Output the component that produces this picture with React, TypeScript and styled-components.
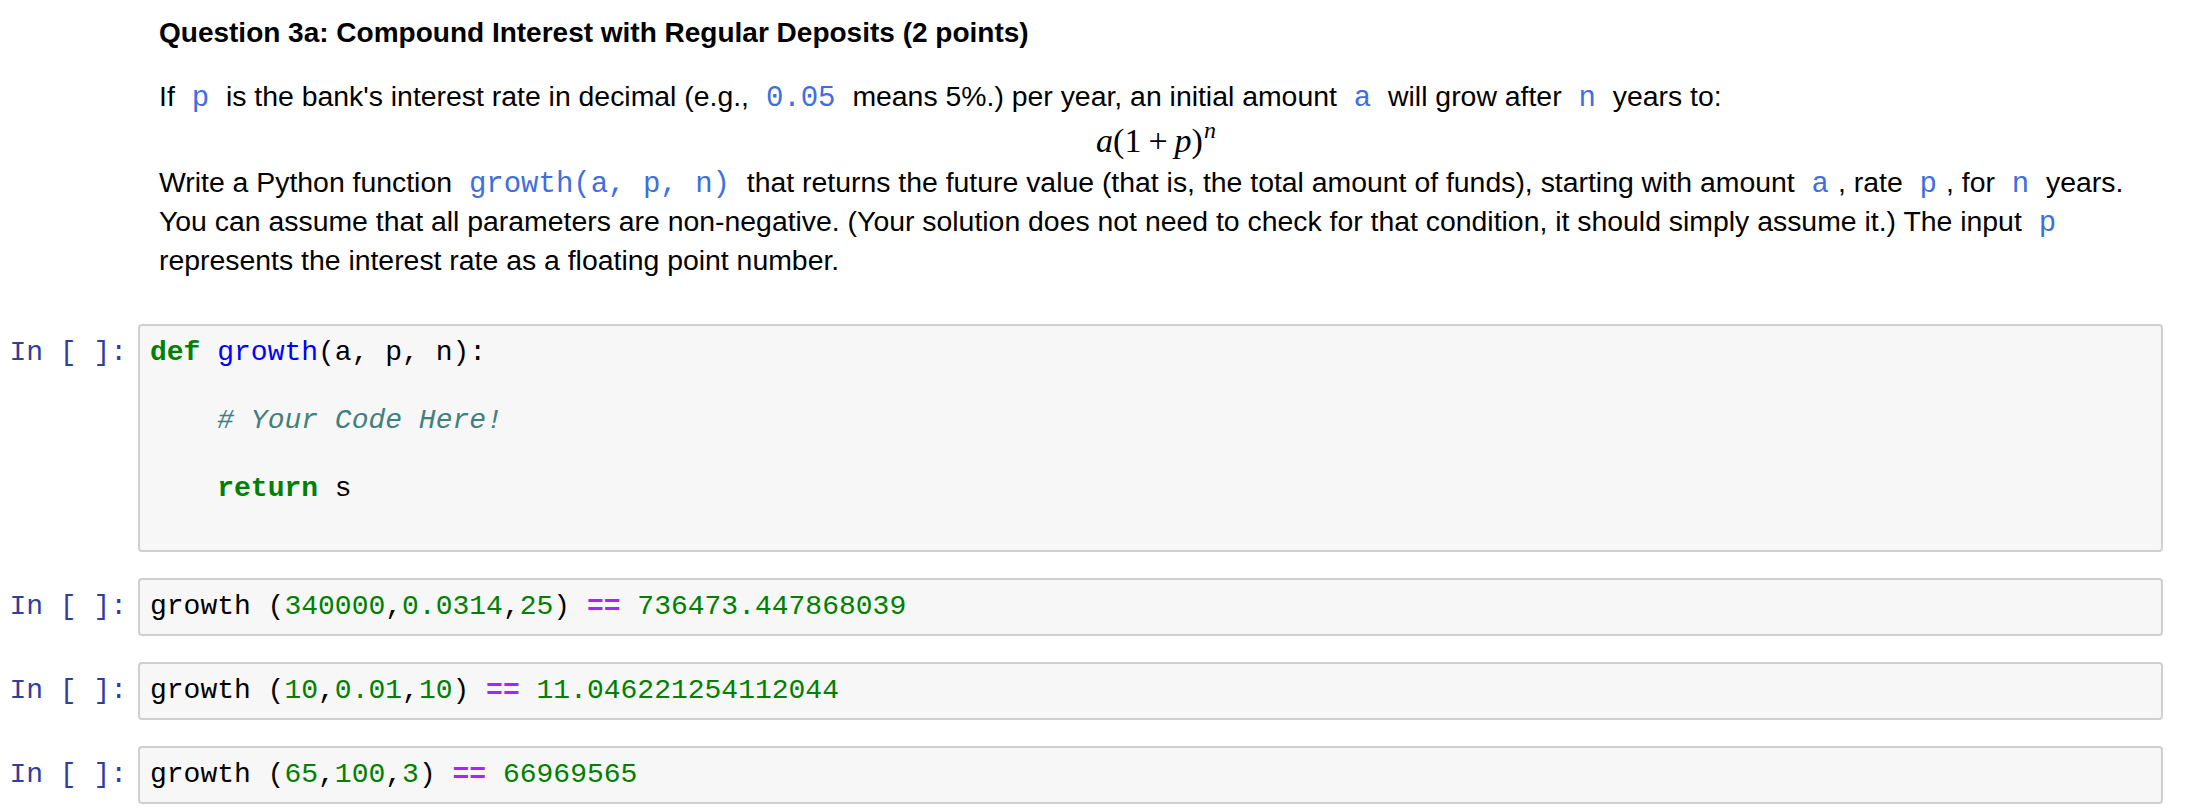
import React from "react";
import styled, { createGlobalStyle } from "styled-components";

const GlobalStyle = createGlobalStyle`
  html, body {
    margin: 0;
    padding: 0;
    background: #ffffff;
  }
  body {
    font-family: "Liberation Sans", Arial, sans-serif;
    color: #000000;
  }
`;

const mono = `"Liberation Mono", "Courier New", monospace`;

const Notebook = styled.div`
  width: 2190px;
  display: flex;
  flex-direction: column;
`;

const TextCell = styled.div`
  margin-left: 159px;
  width: 1994px;
  padding-top: 20px;
  font-size: 28.4px;
  line-height: 37px;
`;

const Heading = styled.h4`
  margin: 0;
  font-size: 28px;
  line-height: 26px;
  font-weight: 700;
`;

const Para = styled.p<{ $top?: number }>`
  margin: ${(p) => p.$top ?? 0}px 0 0 0;
`;

const InlineCode = styled.code`
  font-family: ${mono};
  font-size: 29px;
  color: #3e6ee0;
  padding: 0 9px;
`;

const MathBlock = styled.div`
  height: 47px;
  line-height: 47px;
  display: flex;
  justify-content: center;
  font-family: "Liberation Serif", "Times New Roman", serif;
  font-size: 34px;
`;

const Var = styled.i`
  font-style: italic;
`;

const Op = styled.span`
  margin: 0 7px;
`;

const Sup = styled.sup`
  font-size: 24px;
  line-height: 0;
  vertical-align: 14px;
  margin-left: 1px;
`;

const Cells = styled.div`
  margin-top: 45px;
  display: flex;
  flex-direction: column;
  gap: 26px;
`;

const CodeRow = styled.div`
  display: flex;
  align-items: flex-start;
`;

const Prompt = styled.div`
  flex: 0 0 138px;
  box-sizing: border-box;
  padding: 12px 11px 0 0;
  text-align: right;
  font-family: ${mono};
  font-size: 28px;
  line-height: 34px;
  color: #303f9f;
  white-space: pre;
`;

const InputArea = styled.div`
  flex: 0 0 2025px;
  box-sizing: border-box;
  border: 2px solid #cfcfcf;
  border-radius: 4px;
  background: #f7f7f7;
  padding: 10px 10px;
`;

const Code = styled.pre`
  margin: 0;
  font-family: ${mono};
  font-size: 28px;
  line-height: 34px;
  color: #000000;
  white-space: pre;
`;

const Keyword = styled.span`
  color: #008000;
  font-weight: 700;
`;

const Def = styled.span`
  color: #0000ff;
`;

const Comment = styled.span`
  color: #408080;
  font-style: italic;
`;

const Num = styled.span`
  color: #008000;
`;

const Operator = styled.span`
  color: #aa22ff;
  font-weight: 700;
`;

function Cell({ children }: { children: React.ReactNode }) {
  return (
    <CodeRow>
      <Prompt>{"In [ ]:"}</Prompt>
      <InputArea>
        <Code>{children}</Code>
      </InputArea>
    </CodeRow>
  );
}

const tests: { args: string[]; result: string }[] = [
  { args: ["340000", "0.0314", "25"], result: "736473.447868039" },
  { args: ["10", "0.01", "10"], result: "11.046221254112044" },
  { args: ["65", "100", "3"], result: "66969565" },
];

export default function App() {
  return (
    <Notebook>
      <GlobalStyle />
      <TextCell>
        <Heading>Question 3a: Compound Interest with Regular Deposits (2 points)</Heading>
        <Para $top={32}>
          If <InlineCode>p</InlineCode> is the bank's interest rate in decimal (e.g.,{" "}
          <InlineCode>0.05</InlineCode> means 5%.) per year, an initial amount{" "}
          <InlineCode>a</InlineCode> will grow after <InlineCode>n</InlineCode> years to:
        </Para>
        <MathBlock>
          <span>
            <Var>a</Var>(1<Op>+</Op>
            <Var>p</Var>)
            <Sup>
              <Var>n</Var>
            </Sup>
          </span>
        </MathBlock>
        <Para>
          Write a Python function <InlineCode>growth(a, p, n)</InlineCode> that returns the future
          value (that is, the total amount of funds), starting with amount <InlineCode>a</InlineCode>,
          rate <InlineCode>p</InlineCode>, for <InlineCode>n</InlineCode> years. You can assume that
          all parameters are non-negative. (Your solution does not need to check for that condition,
          it should simply assume it.) The input <InlineCode>p</InlineCode> represents the interest
          rate as a floating point number.
        </Para>
      </TextCell>
      <Cells>
        <Cell>
          <Keyword>def</Keyword> <Def>growth</Def>(a, p, n):{"\n\n    "}
          <Comment># Your Code Here!</Comment>
          {"\n\n    "}
          <Keyword>return</Keyword> s{"\n "}
        </Cell>
        {tests.map((t, i) => (
          <Cell key={i}>
            growth (
            {t.args.map((a, j) => (
              <React.Fragment key={j}>
                {j > 0 && ","}
                <Num>{a}</Num>
              </React.Fragment>
            ))}
            ) <Operator>==</Operator> <Num>{t.result}</Num>
          </Cell>
        ))}
      </Cells>
    </Notebook>
  );
}
